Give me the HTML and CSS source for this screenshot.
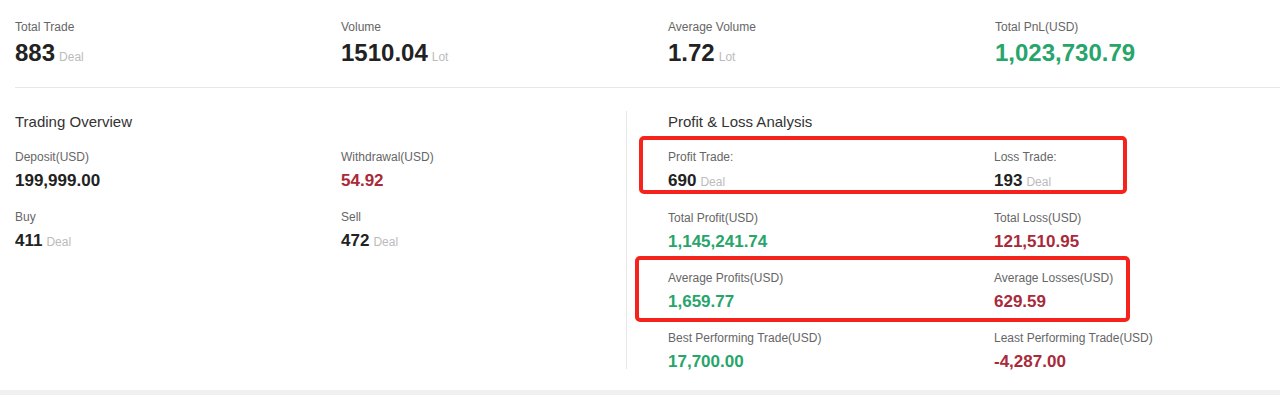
FILE: index.html
```html
<!DOCTYPE html>
<html>

<head>
	<meta name="viewport" content="width=device-width, initial-scale=1" />
	<title>Trading Summary</title>
	<link rel="stylesheet" href="styles.css">
</head>

<body>
	<div class="card">
		<div class="summary">
			<div class="stat">
				<div class="label">Total Trade</div>
				<div class="big">883<span class="unit">Deal</span></div>
			</div>
			<div class="stat">
				<div class="label">Volume</div>
				<div class="big">1510.04<span class="unit">Lot</span></div>
			</div>
			<div class="stat">
				<div class="label">Average Volume</div>
				<div class="big">1.72<span class="unit">Lot</span></div>
			</div>
			<div class="stat">
				<div class="label">Total PnL(USD)</div>
				<div class="big up">1,023,730.79</div>
			</div>
		</div>

		<div class="detail">
			<div class="panel left">
				<div class="title">Trading Overview</div>
				<div class="grid">
					<div class="item">
						<div class="label">Deposit(USD)</div>
						<div class="val">199,999.00</div>
					</div>
					<div class="item">
						<div class="label">Withdrawal(USD)</div>
						<div class="val down">54.92</div>
					</div>
					<div class="item">
						<div class="label">Buy</div>
						<div class="val">411<span class="unit">Deal</span></div>
					</div>
					<div class="item">
						<div class="label">Sell</div>
						<div class="val">472<span class="unit">Deal</span></div>
					</div>
				</div>
			</div>

			<div class="panel right">
				<div class="title">Profit &amp; Loss Analysis</div>
				<div class="grid">
					<div class="item">
						<div class="label">Profit Trade:</div>
						<div class="val">690<span class="unit">Deal</span></div>
					</div>
					<div class="item">
						<div class="label">Loss Trade:</div>
						<div class="val">193<span class="unit">Deal</span></div>
					</div>
					<div class="item">
						<div class="label">Total Profit(USD)</div>
						<div class="val up">1,145,241.74</div>
					</div>
					<div class="item">
						<div class="label">Total Loss(USD)</div>
						<div class="val down">121,510.95</div>
					</div>
					<div class="item">
						<div class="label">Average Profits(USD)</div>
						<div class="val up">1,659.77</div>
					</div>
					<div class="item">
						<div class="label">Average Losses(USD)</div>
						<div class="val down">629.59</div>
					</div>
					<div class="item">
						<div class="label">Best Performing Trade(USD)</div>
						<div class="val up">17,700.00</div>
					</div>
					<div class="item">
						<div class="label">Least Performing Trade(USD)</div>
						<div class="val down">-4,287.00</div>
					</div>
				</div>
				<!-- highlight marks drawn over the rows -->
				<div class="mark mark1"></div>
				<div class="mark mark2"></div>
			</div>
		</div>
	</div>
</body>

</html>
```

FILE: styles.css
```css
body {
	margin:0;
	background-color:#f0f0f0;
	font-family:"Liberation Sans", Arial, sans-serif;
	color:#222;
}

.card {
	background-color:#fff;
	height:390px;
	overflow:hidden;
}

.summary {
	display:grid;
	grid-template-columns:326px 327px 327px 327px;
	margin-left:15px;
	padding-top:19px;
	height:68px;
	border-bottom:1px solid #e8e8e8;
}

.label {
	font-size:12px;
	line-height:16px;
	color:#666;
}

.big {
	margin-top:3px;
	font-size:24px;
	line-height:30px;
	font-weight:bold;
	color:#222;
}

.unit {
	font-size:12px;
	font-weight:normal;
	color:#bbb;
	margin-left:4px;
}

.up {
	color:#27a56b;
}

.down {
	color:#a92a3a;
}

.detail {
	display:flex;
	padding-top:23px;
}

.panel {
	position:relative;
	padding-top:2px;
}

.left {
	width:611px;
	padding-left:15px;
	border-right:1px solid #e8e8e8;
	height:256px;
}

.right {
	padding-left:41px;
}

.title {
	font-size:15px;
	line-height:18px;
	color:#333;
	margin-bottom:18px;
}

.grid {
	display:grid;
	grid-template-columns:326px 327px;
	row-gap:17px;
}

.val {
	margin-top:5px;
	font-size:17px;
	line-height:22px;
	font-weight:bold;
}

.mark {
	position:absolute;
	border:4px solid #f5231c;
	border-radius:5px;
	box-sizing:border-box;
}

.mark1 {
	left:12px;
	top:25px;
	width:488px;
	height:58px;
}

.mark2 {
	left:8px;
	top:145px;
	width:495px;
	height:66px;
}
```
